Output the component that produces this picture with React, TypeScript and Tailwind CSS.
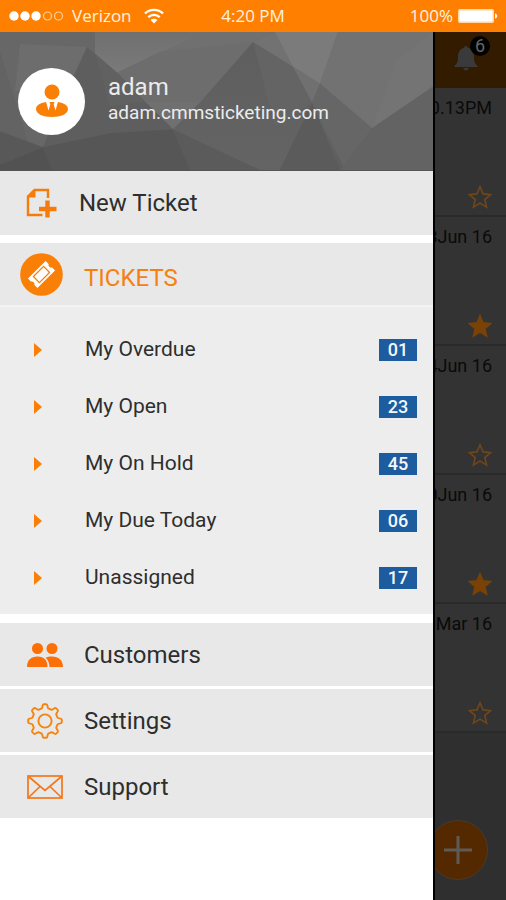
import { ReactNode } from 'react';

interface TicketFilter {
  label: string;
  count: string;
}

interface TicketRow {
  date: string;
  starred: boolean;
}

const FILTERS: TicketFilter[] = [
  { label: 'My Overdue', count: '01' },
  { label: 'My Open', count: '23' },
  { label: 'My On Hold', count: '45' },
  { label: 'My Due Today', count: '06' },
  { label: 'Unassigned', count: '17' },
];

const ROWS: TicketRow[] = [
  { date: '0.13PM', starred: false },
  { date: '3Jun 16', starred: true },
  { date: '4Jun 16', starred: false },
  { date: '0Jun 16', starred: true },
  { date: '6Mar 16', starred: false },
];

function StatusBar() {
  return (
    <header className="flex h-8 items-center justify-between bg-[#ff8000] px-2 font-['Open_Sans',sans-serif] text-[17px] font-medium text-[#fff3e0]">
      <div className="flex flex-1 items-center gap-2">
        <svg width="56" height="12" viewBox="0 0 56 12" aria-hidden="true">
          <g fill="#fff">
            <circle cx="6" cy="6" r="4.7" />
            <circle cx="17" cy="6" r="4.7" />
            <circle cx="28" cy="6" r="4.7" />
          </g>
          <g fill="none" stroke="#ffd09a" strokeWidth="1.2">
            <circle cx="39.500" cy="6" r="4" />
            <circle cx="50.500" cy="6" r="4" />
          </g>
        </svg>
        <span>Verizon</span>
        <svg className="ml-1" width="20" height="16" viewBox="0 0 20 16" fill="none" stroke="#fff" strokeWidth="2.4" aria-hidden="true">
          <path d="M1 5.500C6 .6 14 .6 19 5.500" />
          <path d="M4.300 9.200C7.500 6.100 12.500 6.100 15.700 9.200" />
          <path d="M10 15.500l-3.400-3.500c1.900-1.600 4.900-1.600 6.800 0z" fill="#fff" stroke="none" />
        </svg>
      </div>
      <span>4:20 PM</span>
      <div className="flex flex-1 items-center justify-end gap-1">
        <span>100%</span>
        <svg width="41" height="16" viewBox="0 0 41 16" aria-hidden="true">
          <rect x="1" y="1" width="36" height="14" rx="2" fill="#ffd9a8" />
          <rect x="2.500" y="2.500" width="33" height="11" rx="1" fill="#fff" />
          <path d="M38 5.500c3 .6 3 4.400 0 5z" fill="#fff" />
        </svg>
      </div>
    </header>
  );
}

function LowPolyBackground() {
  return (
    <svg className="absolute inset-0 h-full w-full" viewBox="0 0 433 139" preserveAspectRatio="none" aria-hidden="true">
      <defs>
        <linearGradient id="base" x1="0" y1="0" x2="0" y2="1">
          <stop offset="0" stopColor="#6f6f6f" />
          <stop offset="1" stopColor="#5e5e5e" />
        </linearGradient>
        <linearGradient id="light" x1="0" y1="0" x2="0" y2="1">
          <stop offset="0" stopColor="#707070" />
          <stop offset="1" stopColor="#7a7a7a" />
        </linearGradient>
        <linearGradient id="peak" x1="0" y1="0" x2="0" y2="1">
          <stop offset="0" stopColor="#5e5e5e" />
          <stop offset="1" stopColor="#646464" />
        </linearGradient>
      </defs>
      <rect width="433" height="139" fill="url(#base)" />
      <path d="M0 0H95V22L87 15L72 48L43 116L0 100Z" fill="#676767" />
      <path d="M20 12L87 15L72 48L15 60Z" fill="#6d6d6d" />
      <path d="M0 20L28 110L0 100Z" fill="#636363" />
      <path d="M95 0H205L117 41L95 22Z" fill="url(#light)" />
      <path d="M205 0H275L253 10L200 71L173 98L145 70L117 41Z" fill="#707070" />
      <path d="M160 20L253 10L200 71L145 70L117 41Z" fill="#6d6d6d" />
      <path d="M87 15L117 41L145 70L173 98L43 116L72 48Z" fill="#5e5e5e" />
      <path d="M95 22L117 41L145 70L110 75Z" fill="#616161" />
      <path d="M253 10L200 71L173 98L260 139H280L312 71L293 35Z" fill="url(#peak)" />
      <path d="M253 10L275 95L312 71L293 35Z" fill="#646464" />
      <path d="M253 10L275 0L293 35Z" fill="#727272" />
      <path d="M275 0H338L320 52L293 35Z" fill="#7b7b7b" />
      <path d="M293 35L320 52L312 71Z" fill="#707070" />
      <path d="M338 0H433V55L372 97L320 52Z" fill="#727272" />
      <path d="M433 0V55L372 97L395 30Z" fill="#747474" />
      <path d="M320 52L372 97L345 139L312 71Z" fill="#666" />
      <path d="M433 55V139H340L372 97Z" fill="#636363" />
      <path d="M312 71L280 139H340Z" fill="#5b5b5b" />
      <path d="M0 100L43 116L0 134Z" fill="#585858" />
      <path d="M43 116L110 102L173 98L190 139H52Z" fill="#565656" />
      <path d="M0 134L43 116L52 139H0Z" fill="#525252" />
      <path d="M173 98L260 139H190Z" fill="#5b5b5b" />
    </svg>
  );
}

function UserIcon() {
  return (
    <svg width="34" height="36" viewBox="0 0 34 36" fill="#f97f06" aria-hidden="true">
      <circle cx="17" cy="9" r="7.500" />
      <path d="M11 19C5 20 1 22.500 1 26c0 5 7 8 16 8s16-3 16-8c0-3.500-4-6-10-7l-2.500 8.500-1.800-6 .8-2.500h-5l.8 2.500-1.800 6z" />
    </svg>
  );
}

function NewTicketIcon() {
  return (
    <svg width="32" height="30" viewBox="0 0 32 30" fill="none" stroke="#f57c0a" aria-hidden="true">
      <path d="M16.500 27H2V8.500L8.500 2H22v8" strokeWidth="2.400" />
      <path d="M2 9.500V8L8 2h1.500v7.500z" fill="#f57c0a" stroke="none" />
      <path d="M21.500 12.500v17M13 21h17.500" strokeWidth="4.400" />
    </svg>
  );
}

function TicketIcon() {
  return (
    <svg width="43" height="43" viewBox="0 0 43 43" aria-hidden="true">
      <circle cx="21.500" cy="21.500" r="21.300" fill="#f97f06" />
      <g transform="rotate(-45 21.500 21.500)">
        <path d="M9 14.800h25v4.200a2.800 2.800 0 0 0 0 5v4.200H9V24a2.800 2.800 0 0 0 0-5z" fill="#fff" />
        <rect x="14.300" y="17.300" width="14.400" height="8.400" fill="none" stroke="#f97f06" strokeWidth="1.300" />
      </g>
    </svg>
  );
}

function CustomersIcon() {
  return (
    <svg width="36" height="26" viewBox="0 0 36 26" fill="#fb6f06" aria-hidden="true">
      <circle cx="10.500" cy="6.500" r="5.500" />
      <circle cx="25" cy="6.500" r="5.500" />
      <path d="M0 25c0-7 4-10.500 10.500-10.500S20.500 18 20.500 25z" />
      <path d="M18.500 15.800c1.900-.9 4-1.300 6.500-1.300 6.500 0 11 3.500 11 10.500H22.500c0-4-1.300-7-4-9.200z" />
    </svg>
  );
}

function GearIcon() {
  return (
    <svg width="36" height="36" viewBox="0 0 36 36" fill="none" stroke="#f5840f" strokeWidth="1.900" strokeLinejoin="round" aria-hidden="true">
      <circle cx="18" cy="18" r="6.600" />
      <path d="M14.800 5.300 C15.600 4.700 15.200 1.200 16.600 1.200 H19.400 C20.800 1.200 20.400 4.700 21.200 5.300 L24.700 6.800 C25.700 6.900 27.900 4.200 28.900 5.100 L30.900 7.100 C31.800 8.100 29.100 10.300 29.200 11.300 L30.700 14.800 C31.300 15.600 34.800 15.200 34.800 16.600 V19.400 C34.800 20.800 31.300 20.400 30.700 21.200 L29.200 24.700 C29.100 25.700 31.800 27.900 30.900 28.900 L28.900 30.900 C27.900 31.800 25.700 29.100 24.700 29.200 L21.200 30.700 C20.400 31.300 20.800 34.800 19.400 34.800 H16.600 C15.200 34.800 15.600 31.300 14.800 30.700 L11.300 29.200 C10.300 29.100 8.100 31.800 7.100 30.900 L5.100 28.900 C4.200 27.900 6.900 25.700 6.800 24.700 L5.300 21.200 C4.700 20.400 1.200 20.800 1.200 19.400 V16.600 C1.200 15.200 4.700 15.600 5.300 14.800 L6.800 11.300 C6.900 10.300 4.200 8.100 5.100 7.100 L7.100 5.100 C8.100 4.200 10.300 6.900 11.300 6.800 Z" />
    </svg>
  );
}

function EnvelopeIcon() {
  return (
    <svg width="36" height="24" viewBox="0 0 36 24" fill="none" stroke="#f5761a" strokeWidth="1.700" aria-hidden="true">
      <rect x="1" y="1" width="34" height="22" />
      <path d="M1.500 1.500L18 15.500L34.500 1.500M1.500 22.500L13 11.500M34.500 22.500L23 11.500" />
    </svg>
  );
}

function BellIcon() {
  return (
    <svg width="24" height="27" viewBox="0 0 24 27" fill="#3b3a3a" aria-hidden="true">
      <path d="M12 1c1 0 1.700.6 1.800 1.700C18 3.700 20 7.200 20 11.500c0 5 .8 7.500 3.500 9v1.500H.5v-1.500C3.200 19 4 16.500 4 11.500c0-4.300 2-7.800 6.200-8.800C10.300 1.600 11 1 12 1z" />
      <path d="M9.300 23h5.400c-.4 3.300-5 3.300-5.400 0z" />
    </svg>
  );
}

function StarIcon({ filled }: { filled: boolean }) {
  return (
    <svg width="24" height="24" viewBox="0 0 24 24" fill={filled ? '#7a4206' : 'none'} stroke={filled ? '#7a4206' : '#70461c'} strokeWidth="1.600" aria-hidden="true">
      <path d="M12 1.800l3 7.100 7.600.7-5.800 5 1.800 7.500L12 18.100l-6.600 4 1.800-7.500-5.800-5 7.600-.7z" />
    </svg>
  );
}

function MenuLink({ icon, label }: { icon: ReactNode; label: string }) {
  return (
    <a href="#" className="flex h-[63px] items-center bg-[#e8e8e8] pl-[27px] text-2xl text-[#2e2e2e]">
      <span className="flex w-[57px] items-center">{icon}</span>
      {label}
    </a>
  );
}

function Drawer() {
  return (
    <nav className="flex flex-1 flex-col bg-white">
      <div className="relative h-[139px] overflow-hidden border-b border-[#555]">
        <LowPolyBackground />
        <div className="relative flex h-full items-center gap-[23px] pl-[18px]">
          <div className="flex h-[67px] w-[67px] items-center justify-center rounded-full bg-white">
            <UserIcon />
          </div>
          <div className="pb-1 text-[#ececec]">
            <p className="text-2xl leading-7">adam</p>
            <p className="text-[19px] leading-6">adam.cmmsticketing.com</p>
          </div>
        </div>
      </div>

      <a href="#" className="flex h-16 items-center bg-[#e8e8e8] pl-[26px] text-2xl text-[#2e2e2e]">
        <span className="flex w-[53px] items-center">
          <NewTicketIcon />
        </span>
        New Ticket
      </a>

      <section className="mt-2 bg-[#ededed]">
        <h2 className="flex h-16 items-center border-b-2 border-[#f3f3f3] bg-[#e8e8e8] pl-5 text-2xl text-[#f5800f]">
          <span className="flex w-16 items-center">
            <TicketIcon />
          </span>
          <span className="pt-2">TICKETS</span>
        </h2>
        <ul className="pt-3.5 pb-2">
          {FILTERS.map((filter) => (
            <li key={filter.label}>
              <a href="#" className="flex h-[57px] items-center pr-4 pl-[34px] text-[21px] text-[#2e2e2e]">
                <span className="flex w-[51px] items-center">
                  <svg width="8" height="14" viewBox="0 0 8 14" fill="#f97f06" aria-hidden="true">
                    <path d="M0 0L8 7L0 14z" />
                  </svg>
                </span>
                <span className="flex-1">{filter.label}</span>
                <span className="flex h-[22px] w-[38px] items-center justify-center bg-[#1d5c9f] text-lg font-medium text-[#f4f7fa]">
                  {filter.count}
                </span>
              </a>
            </li>
          ))}
        </ul>
      </section>

      <div className="mt-[9px] flex flex-col gap-[3px]">
        <MenuLink icon={<CustomersIcon />} label="Customers" />
        <MenuLink icon={<GearIcon />} label="Settings" />
        <MenuLink icon={<EnvelopeIcon />} label="Support" />
      </div>
    </nav>
  );
}

// Dimmed ticket list that stays visible beside the open drawer
function TicketList() {
  return (
    <main className="flex w-[73px] flex-col overflow-hidden border-l-2 border-black bg-[#2f2f2f]">
      <div className="flex h-14 justify-end bg-[#331b00] pt-3 pr-7">
        <button type="button" aria-label="Notifications" className="relative h-7">
          <BellIcon />
          <span className="absolute -top-2 -right-3 flex h-5 w-5 items-center justify-center rounded-full bg-black text-lg text-[#666]">
            6
          </span>
        </button>
      </div>
      <ul>
        {ROWS.map((row, index) => (
          <li key={index} className="flex h-[129px] flex-col items-end justify-between border-b-2 border-[#2a2a2a] bg-[#333] pt-2 pr-3.5 pb-1.5">
            <span className="text-lg leading-6 whitespace-nowrap text-[#0a0a0a]">{row.date}</span>
            <button type="button" aria-label="Star ticket">
              <StarIcon filled={row.starred} />
            </button>
          </li>
        ))}
      </ul>
      <button
        type="button"
        aria-label="Add ticket"
        className="mt-auto mr-[18px] mb-5 flex h-[60px] w-[60px] shrink-0 items-center justify-center self-end rounded-full border border-[#4a3a28] bg-[#552900]"
      >
        <svg width="30" height="30" viewBox="0 0 30 30" stroke="#5f5a55" strokeWidth="3" aria-hidden="true">
          <path d="M15 1v28M1 15h28" />
        </svg>
      </button>
    </main>
  );
}

export default function App() {
  return (
    <div className="flex min-h-screen flex-col font-[Roboto,sans-serif]">
      <StatusBar />
      <div className="flex flex-1">
        <Drawer />
        <TicketList />
      </div>
    </div>
  );
}
